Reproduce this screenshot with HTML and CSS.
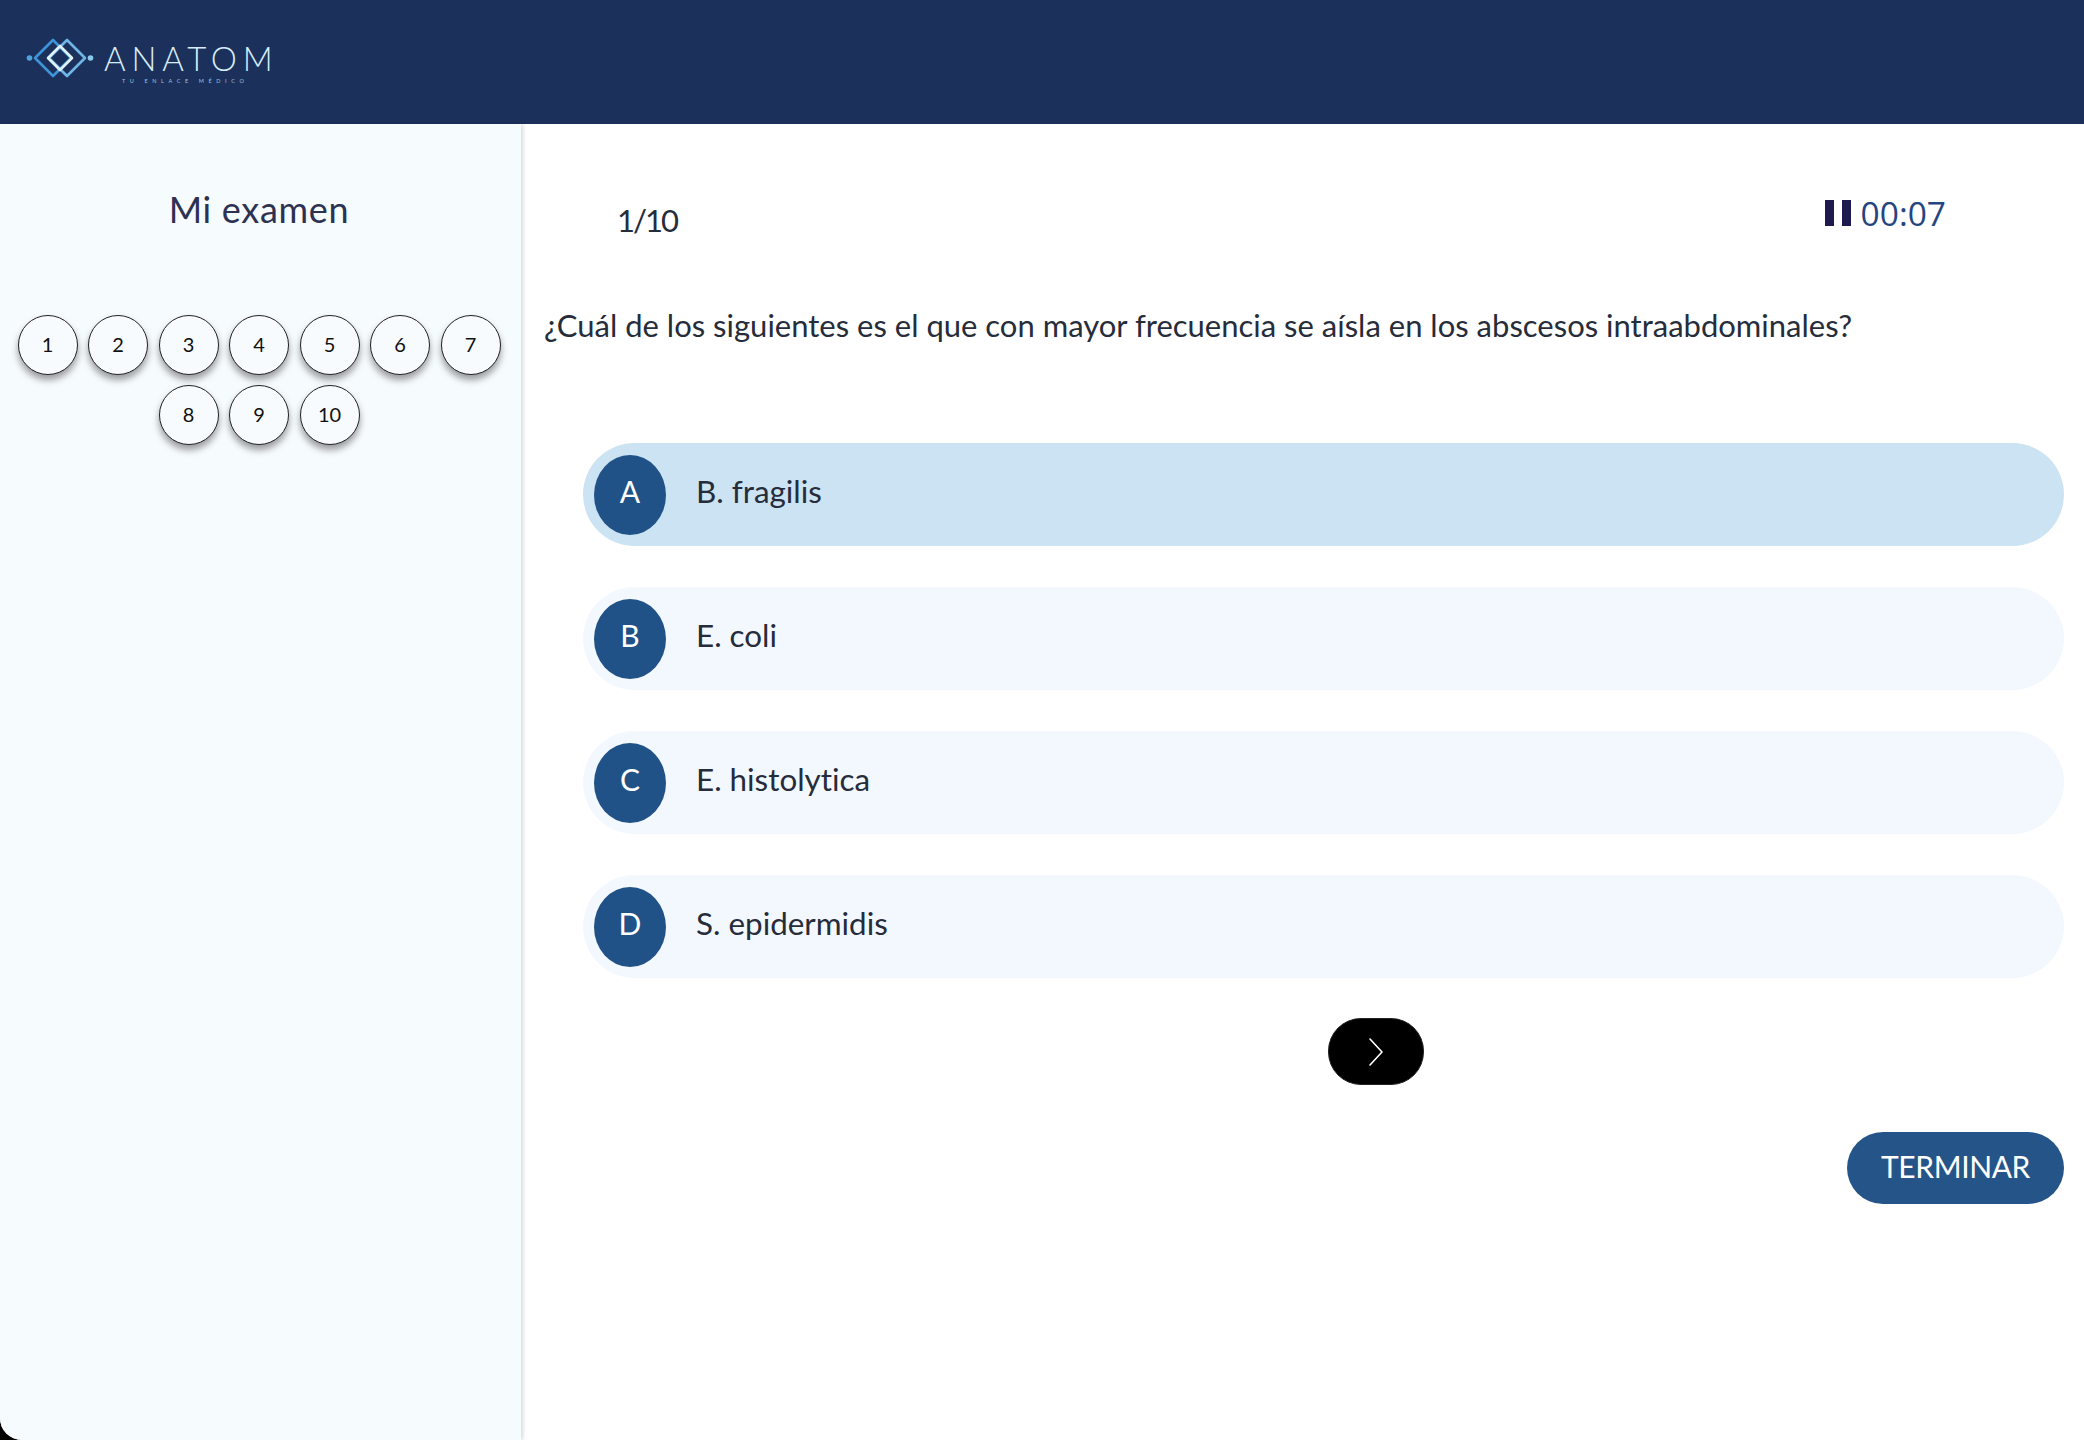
FILE: index.html
```html
<!DOCTYPE html>
<html lang="es">
<head>
<meta charset="utf-8">
<title>Anatom - Mi examen</title>
<link rel="stylesheet" href="styles.css">
</head>
<body>
<div class="app">
  <header class="topbar">
    <div class="logo">
      <svg class="logo-mark" width="68" height="42" viewBox="0 0 68 42" aria-hidden="true">
        <circle cx="3.5" cy="21" r="2.8" fill="#4ea3dc"/>
        <circle cx="64.5" cy="21" r="2.8" fill="#8cc8ec"/>
        <path d="M27 3 L45 21 L27 39 L9 21 Z" fill="none" stroke="#3d95d8" stroke-width="2.6" stroke-linejoin="round"/>
        <path d="M41 3 L59 21 L41 39 L23 21 Z" fill="none" stroke="#6db6e6" stroke-width="2.6" stroke-linejoin="round"/>
        <path d="M34 9 L46 21 L34 33 L22 21 Z" fill="none" stroke="#dff1fb" stroke-width="2.6" stroke-linejoin="round"/>
      </svg>
      <div class="logo-words">
        <div class="logo-name">ANATOM</div>
        <div class="logo-tag">TU ENLACE MÉDICO</div>
      </div>
    </div>
  </header>
  <div class="body-row">
    <aside class="sidebar">
      <h2 class="side-title">Mi examen</h2>
      <div class="numbers">
        <button class="num">1</button><button class="num">2</button><button class="num">3</button><button class="num">4</button><button class="num">5</button><button class="num">6</button><button class="num">7</button><button class="num">8</button><button class="num">9</button><button class="num">10</button>
      </div>
    </aside>
    <main class="content">
      <div class="status">
        <span class="counter">1/10</span>
        <span class="timer"><span class="pause"><i></i><i></i></span>00:07</span>
      </div>
      <p class="question">¿Cuál de los siguientes es el que con mayor frecuencia se aísla en los abscesos intraabdominales?</p>
      <div class="options">
        <div class="option selected"><span class="letter">A</span><span class="opt-text">B. fragilis</span></div>
        <div class="option"><span class="letter">B</span><span class="opt-text">E. coli</span></div>
        <div class="option"><span class="letter">C</span><span class="opt-text">E. histolytica</span></div>
        <div class="option"><span class="letter">D</span><span class="opt-text">S. epidermidis</span></div>
      </div>
      <div class="next-row">
        <button class="next" aria-label="Siguiente">
          <svg width="16" height="28" viewBox="0 0 16 28" aria-hidden="true"><path d="M2 1 L14 14 L2 27" fill="none" stroke="#fff" stroke-width="1.6" stroke-linecap="round" stroke-linejoin="round"/></svg>
        </button>
      </div>
      <div class="finish-row"><button class="finish">TERMINAR</button></div>
    </main>
  </div>
</div>
</body>
</html>
```
FILE: styles.css
```css
* { box-sizing: border-box; }
html, body { margin: 0; height: 100%; background: #000; }
body {
  font-family: "Lato", "Noto Sans", sans-serif;
  font-variant-ligatures: none;
  overflow: hidden;
}
button { font-family: inherit; font-variant-ligatures: none; }

.app {
  width: 2084px;
  height: 1440px;
  display: flex;
  flex-direction: column;
  background: #fff;
  border-radius: 0 0 0 22px;
  overflow: hidden;
}

.topbar {
  flex: none;
  height: 124px;
  background: #1c305c;
  display: flex;
  align-items: flex-start;
  padding: 37px 0 0 26px;
}
.logo { display: flex; align-items: flex-start; gap: 10px; }
.logo-mark { flex: none; }
.logo-words { display: flex; flex-direction: column; align-items: flex-start; width: 172px; padding-top: 3px; }
.logo-name {
  font-weight: 300;
  font-size: 33px;
  line-height: 36px;
  letter-spacing: 5.8px;
  color: #d6ecf9;
  white-space: nowrap;
}
.logo-tag {
  margin: 1px 0 0 18px;
  font-size: 5.5px;
  line-height: 8px;
  letter-spacing: 4.6px;
  color: #9fc4df;
  white-space: nowrap;
}

.body-row { flex: 1; display: flex; min-height: 0; }

.sidebar {
  flex: none;
  width: 521px;
  background: #f6fbfe;
  box-shadow: 2px 0 4px rgba(0, 0, 0, 0.15);
  padding: 62px 15px 0 12px;
  position: relative;
}
.side-title {
  margin: 0;
  font-weight: 400;
  font-size: 36px;
  line-height: 46px;
  letter-spacing: 0.7px;
  text-align: center;
  color: #2d3152;
}
.numbers {
  margin-top: 83px;
  display: flex;
  flex-wrap: wrap;
  justify-content: center;
  gap: 10px 10.5px;
}
.num {
  width: 60px;
  height: 60px;
  padding: 0 0 2px;
  border: 1px solid #222;
  border-radius: 50%;
  background: #f8fbfe;
  color: #111;
  font-size: 20px;
  box-shadow: 0 5px 7px rgba(0, 0, 0, 0.38);
}

.content {
  flex: 1;
  min-width: 0;
  padding: 70px 20px 0 23px;
}
.status {
  display: flex;
  justify-content: space-between;
  align-items: flex-start;
  padding: 0 118px 0 73px;
}
.counter {
  font-size: 31px;
  line-height: 40px;
  letter-spacing: -2px;
  color: #262c3a;
  margin-top: 6px;
}
.timer {
  display: flex;
  align-items: center;
  gap: 10px;
  font-family: "Open Sans", sans-serif;
  font-size: 33.5px;
  line-height: 40px;
  color: #24457f;
  margin-top: -1px;
}
.pause { display: flex; gap: 8px; }
.pause i { display: block; width: 9px; height: 26px; background: #1e1a4d; }

.question {
  margin: 65px 0 0;
  font-size: 31px;
  line-height: 40px;
  color: #262c3a;
  white-space: nowrap;
}

.options {
  margin: 98px 0 0 39px;
  display: flex;
  flex-direction: column;
  gap: 41px;
}
.option {
  height: 103px;
  border-radius: 52px;
  background: #f3f8fe;
  display: flex;
  align-items: center;
  padding-left: 11px;
  gap: 30px;
}
.option.selected { background: #cbe3f3; }
.letter {
  flex: none;
  width: 72px;
  height: 80px;
  border-radius: 50%;
  background: #215287;
  color: #fff;
  font-size: 30px;
  display: flex;
  align-items: center;
  justify-content: center;
  padding-bottom: 8px;
}
.opt-text { font-size: 31.4px; color: #262c3a; padding-bottom: 8px; }

.next-row {
  margin-top: 40px;
  padding-left: 143px;
  display: flex;
  justify-content: center;
}
.next {
  width: 96px;
  height: 67px;
  border: 1px solid #222;
  border-radius: 33px;
  background: #000;
  display: flex;
  align-items: center;
  justify-content: center;
  padding: 0;
}
.finish-row { margin-top: 47px; display: flex; justify-content: flex-end; }
.finish {
  width: 217px;
  height: 72px;
  border: 0;
  border-radius: 36px;
  background: #255488;
  color: #fff;
  font-size: 30px;
  letter-spacing: -0.4px;
  padding: 0 0 4px;
}
```
